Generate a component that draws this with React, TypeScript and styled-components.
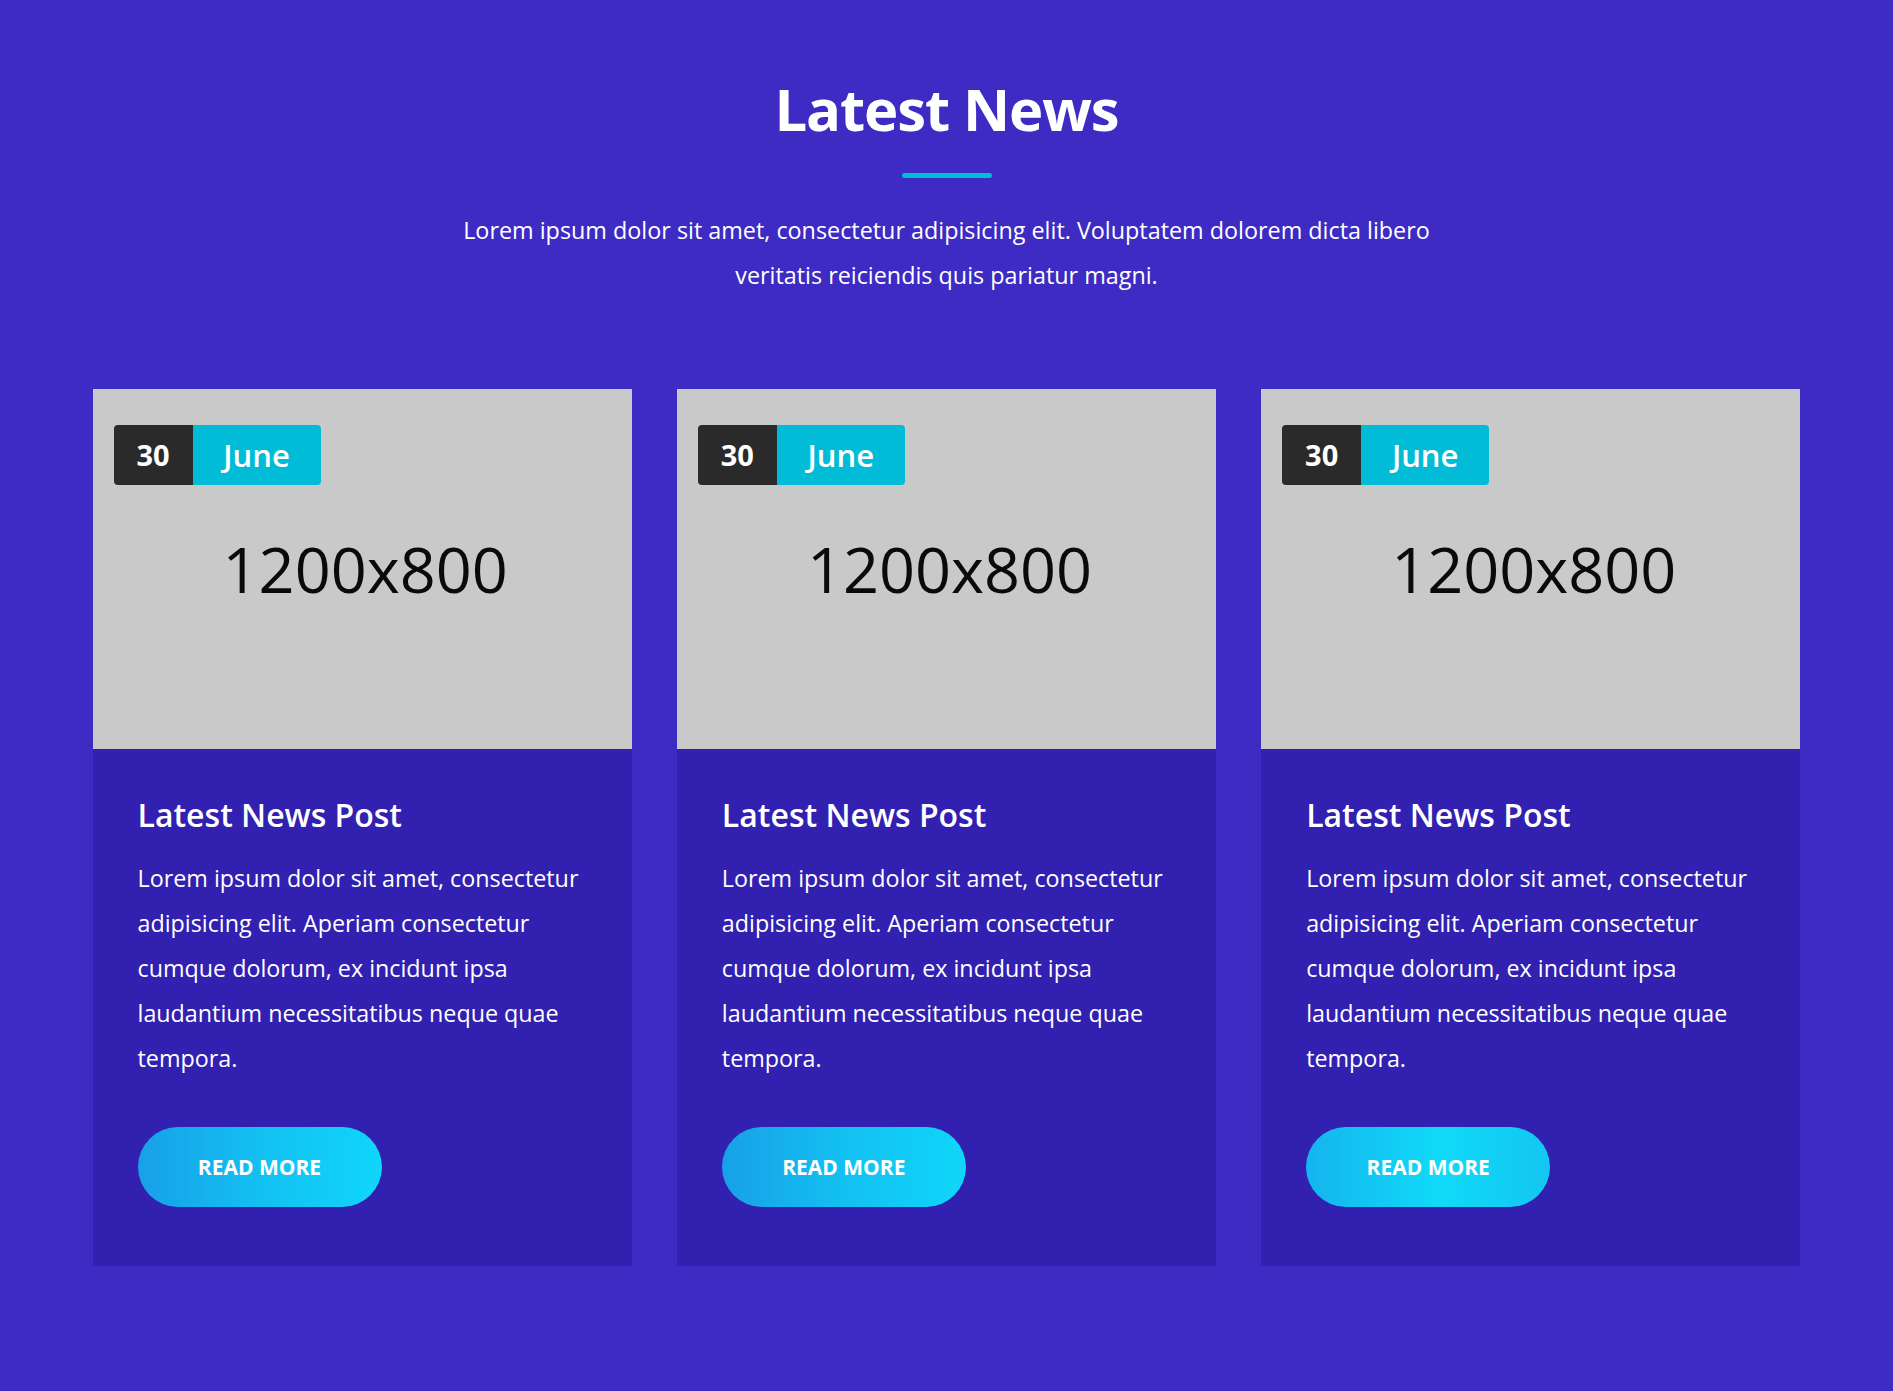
import React from "react";
import styled, { createGlobalStyle, css } from "styled-components";

const GlobalStyle = createGlobalStyle`
  html, body {
    margin: 0;
    padding: 0;
    background: #3d2bc4;
  }
  body {
    font-family: "Open Sans", "Noto Sans", sans-serif;
    color: #ffffff;
    -webkit-font-smoothing: antialiased;
  }
  * { box-sizing: border-box; }
`;

const Section = styled.section`
  min-height: 100vh;
  background: #3d2bc4;
  padding: 74px 0 125px;
`;

const Header = styled.header`
  display: flex;
  flex-direction: column;
  align-items: center;
  text-align: center;
`;

const Title = styled.h1`
  margin: 0;
  font-size: 58px;
  line-height: 69.6px;
  font-weight: 700;
  letter-spacing: -1.1px;
  color: #ffffff;
`;

const Rule = styled.span`
  display: block;
  width: 90px;
  height: 5px;
  margin-top: 29.5px;
  border-radius: 3px;
  background: #00bcd4;
`;

const Lead = styled.p`
  margin: 29.5px 0 0;
  max-width: 1010px;
  font-size: 23.35px;
  line-height: 45px;
  font-weight: 400;
  color: #ffffff;
`;

const Grid = styled.div`
  display: grid;
  grid-template-columns: repeat(3, 1fr);
  gap: 45px;
  max-width: 1708px;
  margin: 91px auto 0;
`;

const Card = styled.article`
  display: flex;
  flex-direction: column;
  background: #3221b0;
`;

const Thumb = styled.div`
  position: relative;
  height: 360px;
  background: #c9c9c9;
  display: flex;
  align-items: center;
  justify-content: center;
`;

const ThumbLabel = styled.span`
  font-family: "Open Sans", "Noto Sans", sans-serif;
  font-size: 63px;
  line-height: 1;
  font-weight: 400;
  color: #0a0a0a;
  margin-left: 6px;
`;

const DateBadge = styled.div`
  position: absolute;
  top: 36px;
  left: 21px;
  display: flex;
  height: 60px;
  border-radius: 4px;
  overflow: hidden;
`;

const DatePart = styled.span<{ $kind: "day" | "month" }>`
  display: flex;
  align-items: center;
  justify-content: center;
  color: #ffffff;
  ${(p) =>
    p.$kind === "day"
      ? css`
          width: 79px;
          background: #2a2a2a;
          font-size: 29px;
          font-weight: 700;
        `
      : css`
          width: 128px;
          background: #00bcd6;
          font-size: 31px;
          font-weight: 600;
        `}
`;

const Body = styled.div`
  display: flex;
  flex-direction: column;
  align-items: flex-start;
  padding: 47px 46px 59px 45px;
`;

const PostTitle = styled.h3`
  margin: 0 0 21.5px;
  font-size: 32px;
  line-height: 38.4px;
  font-weight: 600;
  color: #ffffff;
`;

const PostText = styled.p`
  margin: 0;
  font-size: 23.3px;
  line-height: 45px;
  font-weight: 400;
  color: #ffffff;
`;

const ReadMore = styled.a<{ $shine?: boolean }>`
  display: inline-flex;
  align-items: center;
  justify-content: center;
  margin-top: 46px;
  width: 244px;
  height: 80px;
  border-radius: 40px;
  font-size: 21px;
  font-weight: 700;
  text-transform: uppercase;
  text-decoration: none;
  color: #ffffff;
  cursor: pointer;
  background: ${(p) =>
    p.$shine
      ? "linear-gradient(90deg, #15b4ee 0%, #10daf9 55%, #13c6f1 100%)"
      : "linear-gradient(90deg, #18a0e7 0%, #13c0f2 50%, #10d6f9 100%)"};
`;

const posts = [
  { day: "30", month: "June", shine: false },
  { day: "30", month: "June", shine: false },
  { day: "30", month: "June", shine: true },
];

export default function App() {
  return (
    <>
      <GlobalStyle />
      <Section>
        <Header>
          <Title>Latest News</Title>
          <Rule />
          <Lead>
            Lorem ipsum dolor sit amet, consectetur adipisicing elit. Voluptatem
            dolorem dicta libero veritatis reiciendis quis pariatur magni.
          </Lead>
        </Header>
        <Grid>
          {posts.map((p, i) => (
            <Card key={i}>
              <Thumb>
                <ThumbLabel>1200x800</ThumbLabel>
                <DateBadge>
                  <DatePart $kind="day">{p.day}</DatePart>
                  <DatePart $kind="month">{p.month}</DatePart>
                </DateBadge>
              </Thumb>
              <Body>
                <PostTitle>Latest News Post</PostTitle>
                <PostText>
                  Lorem ipsum dolor sit amet, consectetur adipisicing elit.
                  Aperiam consectetur cumque dolorum, ex incidunt ipsa
                  laudantium necessitatibus neque quae tempora.
                </PostText>
                <ReadMore $shine={p.shine}>Read More</ReadMore>
              </Body>
            </Card>
          ))}
        </Grid>
      </Section>
    </>
  );
}
